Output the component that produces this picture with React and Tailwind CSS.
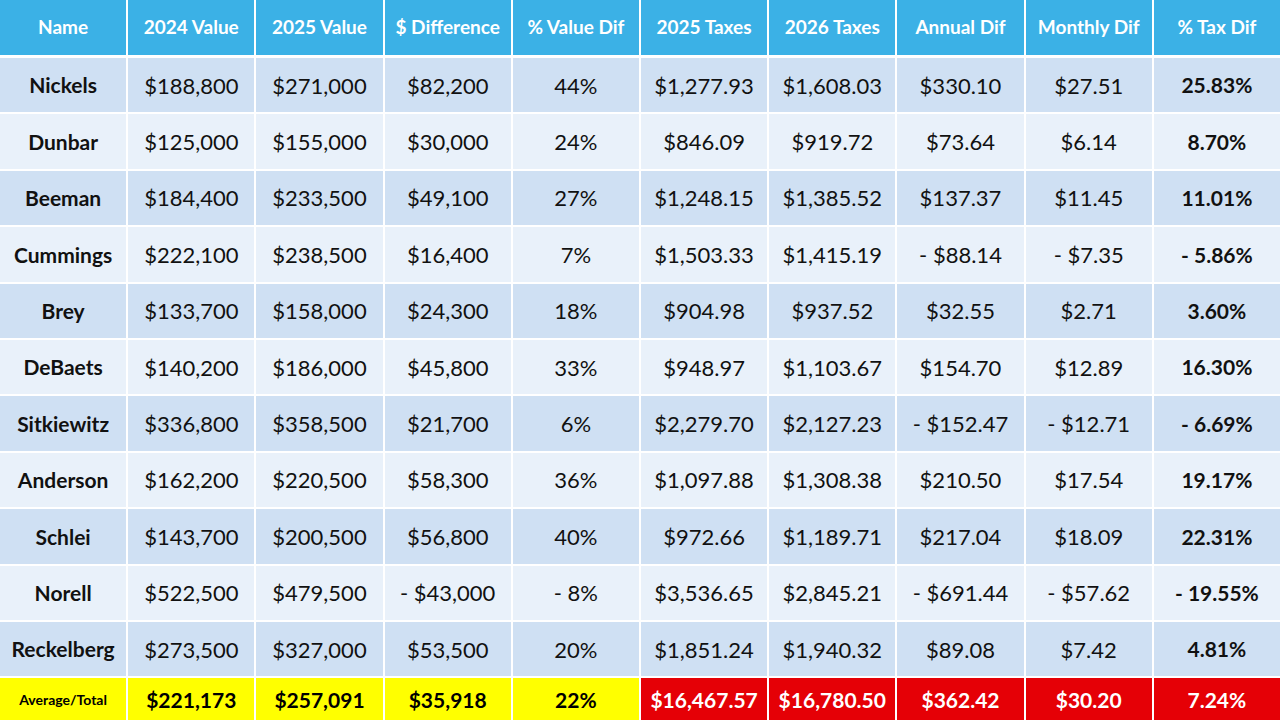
import React from 'react';

const headers = [
  'Name',
  '2024 Value',
  '2025 Value',
  '$ Difference',
  '% Value Dif',
  '2025 Taxes',
  '2026 Taxes',
  'Annual Dif',
  'Monthly Dif',
  '% Tax Dif',
];

const rows = [
  ['Nickels', '$188,800', '$271,000', '$82,200', '44%', '$1,277.93', '$1,608.03', '$330.10', '$27.51', '25.83%'],
  ['Dunbar', '$125,000', '$155,000', '$30,000', '24%', '$846.09', '$919.72', '$73.64', '$6.14', '8.70%'],
  ['Beeman', '$184,400', '$233,500', '$49,100', '27%', '$1,248.15', '$1,385.52', '$137.37', '$11.45', '11.01%'],
  ['Cummings', '$222,100', '$238,500', '$16,400', '7%', '$1,503.33', '$1,415.19', '- $88.14', '- $7.35', '- 5.86%'],
  ['Brey', '$133,700', '$158,000', '$24,300', '18%', '$904.98', '$937.52', '$32.55', '$2.71', '3.60%'],
  ['DeBaets', '$140,200', '$186,000', '$45,800', '33%', '$948.97', '$1,103.67', '$154.70', '$12.89', '16.30%'],
  ['Sitkiewitz', '$336,800', '$358,500', '$21,700', '6%', '$2,279.70', '$2,127.23', '- $152.47', '- $12.71', '- 6.69%'],
  ['Anderson', '$162,200', '$220,500', '$58,300', '36%', '$1,097.88', '$1,308.38', '$210.50', '$17.54', '19.17%'],
  ['Schlei', '$143,700', '$200,500', '$56,800', '40%', '$972.66', '$1,189.71', '$217.04', '$18.09', '22.31%'],
  ['Norell', '$522,500', '$479,500', '- $43,000', '- 8%', '$3,536.65', '$2,845.21', '- $691.44', '- $57.62', '- 19.55%'],
  ['Reckelberg', '$273,500', '$327,000', '$53,500', '20%', '$1,851.24', '$1,940.32', '$89.08', '$7.42', '4.81%'],
];

const totals = ['$221,173', '$257,091', '$35,918', '22%', '$16,467.57', '$16,780.50', '$362.42', '$30.20', '7.24%'];

export default function App() {
  return (
    <div
      className="w-[1280px] h-[720px] bg-white overflow-hidden"
      style={{ fontFamily: 'Lato, "Open Sans", sans-serif' }}
    >
      {/* Header */}
      <div className="grid grid-cols-10 gap-x-[2px] h-[55px] mb-[3px]">
        {headers.map((h) => (
          <div key={h} className="bg-[#3bb1e6] flex items-center justify-center text-white font-bold text-[19px]">
            {h}
          </div>
        ))}
      </div>

      {/* Body */}
      <div className="flex flex-col gap-y-[2px]">
        {rows.map((row, i) => (
          <div key={row[0]} className="grid grid-cols-10 gap-x-[2px] h-[54.4px]">
            {row.map((cell, j) => (
              <div
                key={j}
                className={
                  'flex items-center justify-center text-[#111] ' +
                  (i % 2 === 0 ? 'bg-[#cfe0f3] ' : 'bg-[#e9f1fa] ') +
                  (j === 0 || j === 9 ? 'font-bold text-[21px]' : 'text-[22px]')
                }
              >
                {cell}
              </div>
            ))}
          </div>
        ))}

        {/* Totals */}
        <div className="grid grid-cols-10 gap-x-[2px] h-[42px]">
          <div className="bg-[#ffff00] flex items-center justify-center font-bold text-[14px] text-black">
            Average/Total
          </div>
          {totals.map((t, j) => (
            <div
              key={j}
              className={
                'flex items-center justify-center font-bold text-[21px] ' +
                (j < 4 ? 'bg-[#ffff00] text-black' : 'bg-[#e50006] text-white')
              }
            >
              {t}
            </div>
          ))}
        </div>
      </div>
    </div>
  );
}
